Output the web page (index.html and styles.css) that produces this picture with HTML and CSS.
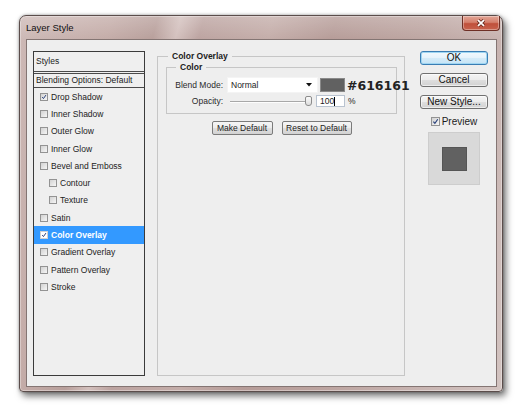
FILE: index.html
```html
<!DOCTYPE html>
<html>
<head>
<meta charset="utf-8">
<title>Layer Style</title>
<link rel="stylesheet" href="styles.css">
</head>
<body>
<div class="window">
  <div class="titlebar">
    <span class="title">Layer Style</span>
    <button class="close" aria-label="Close">
      <svg width="10" height="8" viewBox="0 0 10 8">
        <path class="x-out" d="M2 1.2 L8 6.8 M8 1.2 L2 6.8"/>
        <path class="x-in" d="M2 1.2 L8 6.8 M8 1.2 L2 6.8"/>
      </svg>
    </button>
  </div>

  <div class="client">
    <ul class="styles">
      <li class="head">Styles</li>
      <li class="head sub">Blending Options: Default</li>
      <li class="item"><span class="cb"><svg viewBox="0 0 8 8"><path d="M1.6 4.1 L3.3 6.1 L6.6 1.4"/></svg></span>Drop Shadow</li>
      <li class="item"><span class="cb"></span>Inner Shadow</li>
      <li class="item"><span class="cb"></span>Outer Glow</li>
      <li class="item"><span class="cb"></span>Inner Glow</li>
      <li class="item"><span class="cb"></span>Bevel and Emboss</li>
      <li class="item indent"><span class="cb"></span>Contour</li>
      <li class="item indent"><span class="cb"></span>Texture</li>
      <li class="item"><span class="cb"></span>Satin</li>
      <li class="item active"><span class="cb"><svg viewBox="0 0 8 8"><path d="M1.6 4.1 L3.3 6.1 L6.6 1.4"/></svg></span>Color Overlay</li>
      <li class="item"><span class="cb"></span>Gradient Overlay</li>
      <li class="item"><span class="cb"></span>Pattern Overlay</li>
      <li class="item"><span class="cb"></span>Stroke</li>
    </ul>

    <fieldset class="group">
      <legend>Color Overlay</legend>
      <fieldset class="inner">
        <legend>Color</legend>
        <div class="row">
          <span class="lbl">Blend Mode:</span>
          <div class="select">
            <span>Normal</span>
            <svg class="arrow" width="6" height="4" viewBox="0 0 6 4"><path d="M0 0 H6 L3 3.6 Z"/></svg>
          </div>
          <span class="swatch"></span>
          <span class="hex">#616161</span>
        </div>
        <div class="row row2">
          <span class="lbl">Opacity:</span>
          <div class="slider"><span class="thumb"></span></div>
          <div class="field">100<span class="caret"></span></div>
          <span class="pct">%</span>
        </div>
      </fieldset>
      <div class="defaults">
        <button class="mini make">Make Default</button>
        <button class="mini reset">Reset to Default</button>
      </div>
    </fieldset>

    <div class="actions">
      <button class="btn ok">OK</button>
      <button class="btn">Cancel</button>
      <button class="btn">New Style...</button>
      <label class="preview"><span class="cb big"><svg viewBox="0 0 8 8"><path d="M1.6 4.1 L3.3 6.1 L6.6 1.4"/></svg></span>Preview</label>
      <div class="thumbview"><span class="chip"></span></div>
    </div>
  </div>
</div>
</body>
</html>
```
FILE: styles.css
```css
* { box-sizing: border-box; }

html, body { margin: 0; }

body {
  background: #fff;
  width: 520px;
  height: 405px;
  overflow: hidden;
  font-family: "Liberation Sans", Arial, sans-serif;
  font-size: 8.5px;
  color: #1c1c1c;
}

/* ---------- window frame ---------- */
.window {
  margin: 15px 0 0 19px;
  width: 484px;
  height: 377px;
  border: 1px solid #5b4d4b;
  border-radius: 7px 7px 4px 4px;
  padding: 0 5px 4px 6px;
  display: flex;
  flex-direction: column;
  background:
    linear-gradient(180deg, rgba(255,255,255,.22), rgba(255,255,255,0) 24px),
    linear-gradient(104deg, #cdb9b6 0%, #c4aca8 16%, #b89f9b 24%, #d3c0bd 28%, #bca3a0 32%,
      #c4ada9 44%, #b69c98 55%, #bda5a1 70%, #c8b4b1 85%, #d3c4c1 100%);
  box-shadow: 3px 4px 7px rgba(0,0,0,.55), 0 0 3px rgba(0,0,0,.35),
    inset 0 0 0 1px rgba(255,255,255,.35);
}

.titlebar {
  height: 23px;
  flex: none;
  display: flex;
  justify-content: space-between;
  align-items: flex-start;
}

.title {
  font-size: 9.5px;
  line-height: 23px;
  color: #111;
}

.close {
  width: 38px;
  height: 15px;
  margin-right: -3px;
  padding: 0;
  border: 1px solid #6e2f25;
  border-top: none;
  border-radius: 0 0 4px 4px;
  background: linear-gradient(180deg, #e2a596 0%, #d5806d 45%, #c0503b 55%, #c7624d 100%);
  box-shadow: inset 0 0 0 1px rgba(255,255,255,.35);
  display: flex;
  align-items: center;
  justify-content: center;
}
.close .x-out { stroke: #6a2a1e; stroke-width: 3.4; fill: none; }
.close .x-in { stroke: #fff; stroke-width: 1.8; fill: none; }

/* ---------- dialog body ---------- */
.client {
  flex: 1;
  background: #eeeeee;
  border: 1px solid #847573;
  display: flex;
  align-items: flex-start;
  padding: 11px 0 0 6px;
}

/* style list on the left */
.styles {
  list-style: none;
  margin: 0;
  padding: 0;
  width: 112px;
  height: 325px;
  border: 1px solid #3b3b3b;
  background: #efefef;
}

.head {
  height: 20px;
  line-height: 19px;
  padding-left: 2px;
  border-bottom: 1px solid #4a4a4a;
}
.head.sub {
  margin-top: 1px;
  height: 15px;
  line-height: 13px;
  border-top: 1px solid #4a4a4a;
}

.item {
  height: 17.3px;
  display: flex;
  align-items: center;
  padding-left: 6px;
  color: #222;
}
.item.indent { padding-left: 15px; }
.item.active {
  background: #3399ff;
  color: #fff;
  font-weight: bold;
}

.cb {
  width: 8px;
  height: 8px;
  flex: none;
  margin-right: 3px;
  border: 1px solid #939393;
  background: linear-gradient(135deg, #d2d2d2, #f6f6f6);
  display: flex;
}
.cb svg { width: 100%; height: 100%; }
.cb path { fill: none; stroke: #28407a; stroke-width: 1.3; }
.item.active .cb { background: #fff; border-color: #d0d0d0; }
.cb.big { width: 9px; height: 9px; margin-right: 2px; }

/* centre group */
.group {
  margin: 0 0 0 12px;
  width: 248px;
  height: 325px;
  min-width: 0;
  border: 1px solid #c6c6c6;
  padding: 0 7px 0 8px;
}
.group legend,
.inner legend {
  font-weight: bold;
  font-size: 8.5px;
  line-height: 11px;
  padding: 0 4px;
}
.group > legend { margin-left: 2px; }

.inner {
  margin: 0;
  min-width: 0;
  height: 52px;
  border: 1px solid #c6c6c6;
  padding: 4px 0 0 0;
}
.inner > legend { margin-left: 9px; }

.row {
  display: flex;
  align-items: center;
  height: 16px;
}
.row > * { flex: none; }
.row2 {
  height: 12px;
  margin-top: 2px;
}
.lbl {
  width: 57px;
  text-align: right;
  padding-right: 1px;
  color: #2a2a2a;
}

.select {
  margin-left: 3px;
  width: 91px;
  height: 16px;
  background: #fff;
  border: 1px solid #f4f4f4;
  display: flex;
  align-items: center;
  justify-content: space-between;
  padding: 0 5px 0 3px;
}
.arrow path { fill: #111; }

.swatch {
  margin-left: 2px;
  width: 25px;
  height: 14px;
  background: #616161;
  border: 1px solid #8a8a8a;
}

.hex {
  margin-left: 2px;
  font-family: "DejaVu Sans", sans-serif;
  font-weight: bold;
  font-size: 12.5px;
  color: #222;
  white-space: nowrap;
}

.slider {
  margin-left: 3px;
  width: 85px;
  height: 12px;
  display: flex;
  align-items: center;
  justify-content: flex-end;
  background:
    linear-gradient(#a8a8a8, #a8a8a8) 3px 6px / 76px 1px no-repeat,
    linear-gradient(#fdfdfd, #fdfdfd) 3px 7px / 76px 1px no-repeat;
}
.thumb {
  width: 7px;
  height: 10px;
  border: 1px solid #8c8c8c;
  border-radius: 2px 2px 3px 3px;
  background: linear-gradient(#fbfbfb, #dcdcdc);
}

.field {
  margin-left: 4px;
  width: 29px;
  height: 12px;
  background: #fff;
  border: 1px solid #b9c3d0;
  padding-left: 3px;
  display: flex;
  align-items: center;
  line-height: 10px;
}
.caret {
  width: 1px;
  height: 9px;
  background: #000;
}
.pct { margin-left: 3px; }

.defaults {
  margin-top: 7px;
  display: flex;
  justify-content: center;
  gap: 9px;
}
.mini {
  height: 14px;
  padding: 0;
  font-family: inherit;
  font-size: 8.5px;
  color: #222;
  border: 1px solid #7a7a7a;
  border-radius: 2px;
  background: linear-gradient(180deg, #f5f5f5 0%, #ececec 48%, #dfdfdf 52%, #d2d2d2 100%);
}
.mini.make { width: 61px; }
.mini.reset { width: 70px; }

/* buttons on the right */
.actions {
  margin-left: 15px;
  width: 68px;
  display: flex;
  flex-direction: column;
  align-items: center;
}
.btn {
  width: 68px;
  height: 14px;
  padding: 0;
  margin-bottom: 8px;
  font-family: inherit;
  font-size: 10px;
  line-height: 12px;
  color: #111;
  border: 1px solid #707070;
  border-radius: 3px;
  background: linear-gradient(180deg, #f4f4f4 0%, #ececec 48%, #dedede 52%, #d2d2d2 100%);
  box-shadow: inset 0 0 0 1px rgba(255,255,255,.6);
}
.btn.ok {
  border-color: #3a7db3;
  background: linear-gradient(180deg, #f2f9fd 0%, #e6f3fb 48%, #d4ebf8 52%, #c6e4f6 100%);
  box-shadow: inset 0 0 0 1px #9fd6f2;
}

.preview {
  margin-top: -1px;
  height: 11px;
  display: flex;
  align-items: center;
  font-size: 10px;
}

.thumbview {
  margin-top: 5px;
  width: 52px;
  height: 53px;
  background: #d9d9d9;
  border: 1px solid #cdcdcd;
  display: flex;
  align-items: center;
  justify-content: center;
}
.chip {
  width: 25px;
  height: 24px;
  background: #616161;
  border: 1px solid #555;
}
```
